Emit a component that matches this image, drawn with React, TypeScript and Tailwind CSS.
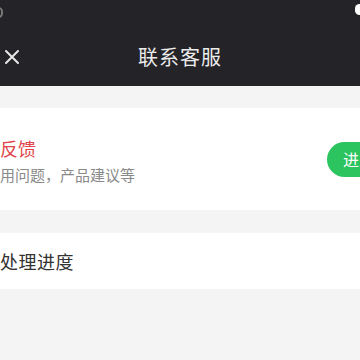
import React from "react";

export default function App() {
  return (
    <div
      className="w-[360px] h-[360px] overflow-hidden bg-[#f4f4f4]"
      style={{ fontFamily: '"Noto Sans CJK SC", "Noto Sans", sans-serif' }}
    >
      {/* Header */}
      <div className="bg-[#232328] h-[86px] flex flex-col">
        <div className="h-[26px] flex items-start justify-between">
          <div className="-ml-[6px] mt-[7px] w-[9px] h-[11px] rounded-full border-2 border-[#777]" />
          <div className="-mr-[4px] mt-[4px] w-[9px] h-[11px] rounded-full bg-white" />
        </div>
        <div className="flex-1 flex items-center relative pt-[2px]">
          <svg
            className="ml-[4px]"
            width="16"
            height="16"
            viewBox="0 0 16 16"
            fill="none"
            stroke="#e8e8e8"
            strokeWidth="2"
            strokeLinecap="round"
          >
            <path d="M2 2L14 14M14 2L2 14" />
          </svg>
          <div className="absolute left-0 right-0 text-center text-[20px] text-[#ececec] tracking-[1px]">
            联系客服
          </div>
        </div>
      </div>

      {/* Feedback card */}
      <div className="mt-[22px] bg-white h-[102px] flex items-center justify-between">
        <div className="flex flex-col pt-[2px]">
          <div className="-ml-[36px] text-[18px] leading-[24px] text-[#e0464b]">意见反馈</div>
          <div className="-ml-[15px] mt-[5px] text-[15px] leading-[20px] text-[#8a8a8a]">
            使用问题，产品建议等
          </div>
        </div>
        <button className="-mr-[31px] h-[35px] px-[16px] rounded-full bg-[#2bc45e] text-white text-[16px]">
          进入
        </button>
      </div>

      {/* Progress card */}
      <div className="mt-[23px] bg-white h-[56px] flex items-center">
        <div className="text-[18px] text-[#333] tracking-[0.5px]">处理进度</div>
      </div>
    </div>
  );
}
